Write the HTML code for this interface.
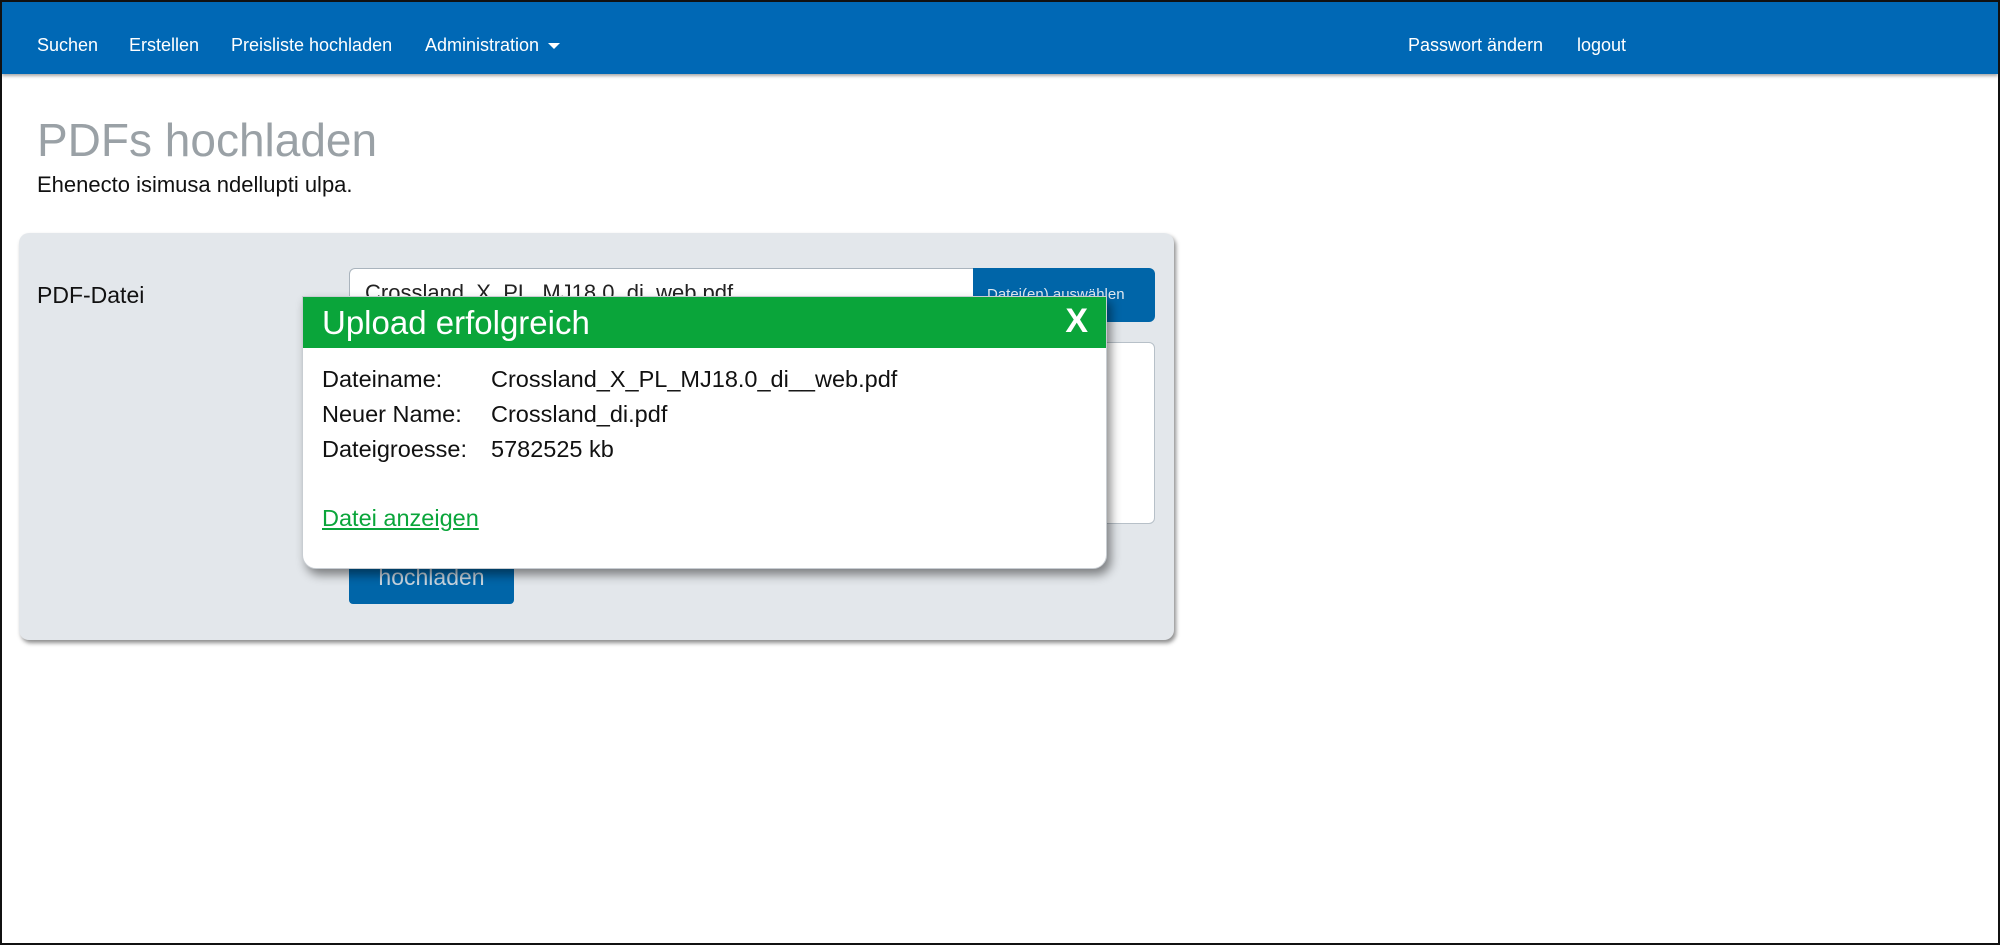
<!DOCTYPE html>
<html><head><meta charset="utf-8"><style>
*{box-sizing:border-box;margin:0;padding:0}
html,body{width:2000px;height:945px;overflow:hidden;background:#fff;font-family:"Liberation Sans",Arial,sans-serif}
.frame{position:absolute;left:0;top:0;width:2000px;height:945px;border:2px solid #111;}
.nav{position:absolute;left:2px;top:2px;width:1996px;height:72px;background:#0068b5;box-shadow:0 2px 3px rgba(0,0,0,.35)}
.nav span{position:absolute;top:33px;color:#fff;font-size:18px}
h1{position:absolute;left:37px;top:113px;font-size:46px;font-weight:normal;color:#9aa1a6}
.sub{position:absolute;left:37px;top:172px;font-size:22px;color:#111}
.panel{position:absolute;left:19px;top:233px;width:1155px;height:407px;background:#e3e7eb;border-radius:10px;box-shadow:2px 3px 4px rgba(0,0,0,.45)}
.lbl{position:absolute;left:37px;top:282px;font-size:23px;color:#111}
.inp{position:absolute;left:349px;top:268px;width:625px;height:54px;background:#fff;border:1px solid #aab4bd;border-radius:6px 0 0 6px;font-size:22px;padding:11px 15px;color:#222;overflow:hidden}
.btn{position:absolute;left:973px;top:268px;width:182px;height:54px;background:#0065a8;border-radius:0 6px 6px 0;color:#dfe8f0;font-size:15px;padding:18px 14px}
.ta{position:absolute;left:349px;top:342px;width:806px;height:182px;background:#fff;border:1px solid #b7c0c8;border-radius:6px}
.hb{position:absolute;left:349px;top:548px;width:165px;height:56px;background:#0065a8;border-radius:0 0 4px 4px;color:#c9d6e0;font-size:23px;text-align:center;padding-top:16px}
.modal{position:absolute;left:302px;top:296px;width:805px;height:273px;background:#fff;border-radius:0 0 14px 14px;box-shadow:4px 6px 10px rgba(0,0,0,.45);border:1px solid #c8cdd2}
.mh{height:51px;background:#0aa53a;color:#fff;font-size:33px;padding:7px 19px}
.mh b{position:absolute;right:18px;top:5px;font-size:34px}
.row{position:absolute;left:19px;font-size:23.5px;color:#111}
.row i{font-style:normal;position:absolute;left:169px;white-space:nowrap}
.link{position:absolute;left:19px;top:208px;font-size:23.5px;color:#0aa53a;text-decoration:underline}
</style></head><body>
<div class="nav">
<span style="left:35px">Suchen</span>
<span style="left:127px">Erstellen</span>
<span style="left:229px">Preisliste hochladen</span>
<span style="left:423px">Administration <span style="position:static;display:inline-block;width:0;height:0;border-left:6px solid transparent;border-right:6px solid transparent;border-top:6px solid #fff;vertical-align:middle;margin-left:4px"></span></span>
<span style="left:1406px">Passwort ändern</span>
<span style="left:1575px">logout</span>
</div>
<h1>PDFs hochladen</h1>
<div class="sub">Ehenecto isimusa ndellupti ulpa.</div>
<div class="panel"></div>
<div class="lbl">PDF-Datei</div>
<div class="inp">Crossland_X_PL_MJ18.0_di_web.pdf</div>
<div class="btn">Datei(en) auswählen</div>
<div class="ta"></div>
<div class="hb">hochladen</div>
<div class="modal">
<div class="mh">Upload erfolgreich<b>X</b></div>
<div class="row" style="top:69px">Dateiname:<i>Crossland_X_PL_MJ18.0_di__web.pdf</i></div>
<div class="row" style="top:104px">Neuer Name:<i>Crossland_di.pdf</i></div>
<div class="row" style="top:139px">Dateigroesse:<i>5782525 kb</i></div>
<div class="link">Datei anzeigen</div>
</div>
<div class="frame"></div>
</body></html>
